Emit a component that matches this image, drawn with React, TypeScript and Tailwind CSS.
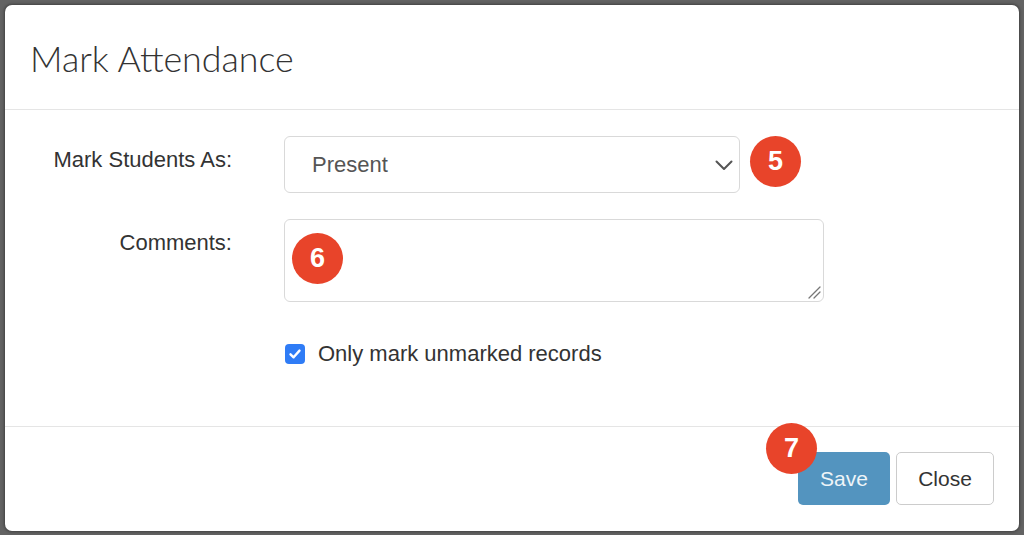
import React from "react";

function Badge({ n, className = "" }: { n: string; className?: string }) {
  return (
    <div
      className={`w-[51px] h-[51px] rounded-full bg-[#e8442a] text-white flex items-center justify-center text-[27px] font-bold font-['Liberation_Sans',Arial,sans-serif] ${className}`}
    >
      {n}
    </div>
  );
}

export default function App() {
  return (
    <div className="w-[1024px] h-[535px] bg-[#636363] p-[5px] overflow-hidden font-['Liberation_Sans',Arial,sans-serif]">
      <div className="h-[526px] w-[1014px] bg-white rounded-[7px] flex flex-col shadow-[0_0_3px_1px_rgba(0,0,0,0.35)]">
        <div className="h-[105px] border-b border-[#e5e5e5] flex items-center pl-[25px] shrink-0">
          <h1 className="text-[35.8px] font-light text-[#333] font-['Lato','Roboto','Liberation_Sans',sans-serif] leading-none mt-[3px]">
            Mark Attendance
          </h1>
        </div>
        <div className="flex-1 pt-[26px]">
          <div className="grid grid-cols-[227px_1fr] gap-x-[52px]">
            <label className="text-right text-[22px] leading-[26px] pt-[11px] text-[#333]">Mark Students As:</label>
            <div className="flex items-center">
              <div className="w-[456px] h-[57px] border border-[#d9d9d9] rounded-[6px] flex items-center justify-between pl-[27px] pr-[6px]">
                <span className="text-[22px] text-[#555]">Present</span>
                <svg width="18" height="11" viewBox="0 0 18 11" className="mt-[1px]">
                  <path d="M1.5 1.5 L9 9 L16.5 1.5" fill="none" stroke="#555" strokeWidth="2" strokeLinecap="round" strokeLinejoin="round" />
                </svg>
              </div>
              <Badge n="5" className="ml-[10px] -mt-[7px]" />
            </div>

            <label className="text-right text-[22px] leading-[26px] pt-[11px] text-[#333] mt-[26px]">Comments:</label>
            <div className="mt-[26px]">
              <div className="relative w-[540px] h-[83px] border border-[#d9d9d9] rounded-[6px]">
                <Badge n="6" className="absolute left-[7px] top-[13px]" />
                <svg width="16" height="16" viewBox="0 0 16 16" className="absolute right-[1px] bottom-[1px]">
                  <path d="M3 14 L14 3 M8 14 L14 8" stroke="#777" strokeWidth="1.3" strokeLinecap="round" />
                </svg>
              </div>
            </div>

            <div />
            <div className="mt-[39px] flex items-center">
              <div className="w-[20px] h-[20px] ml-[1px] rounded-[4px] bg-[#2f7cf6] flex items-center justify-center">
                <svg width="14" height="14" viewBox="0 0 14 14">
                  <path d="M2.5 7.3 L5.6 10.3 L11.5 3.6" fill="none" stroke="white" strokeWidth="2.4" strokeLinecap="round" strokeLinejoin="round" />
                </svg>
              </div>
              <span className="ml-[13px] text-[22px] text-[#333] leading-[26px]">Only mark unmarked records</span>
            </div>
          </div>
        </div>
        <div className="h-[105px] border-t border-[#e5e5e5] flex justify-end items-start pt-[25px] pr-[25px] gap-[6px] shrink-0">
          <div className="relative">
            <button className="w-[92px] h-[53px] rounded-[5px] bg-[#5394bf] text-[#eef4f8] text-[21px]">Save</button>
            <Badge n="7" className="absolute -left-[32px] -top-[29px]" />
          </div>
          <button className="w-[98px] h-[53px] rounded-[5px] bg-white border border-[#cccccc] text-[#333] text-[21px]">Close</button>
        </div>
      </div>
    </div>
  );
}
